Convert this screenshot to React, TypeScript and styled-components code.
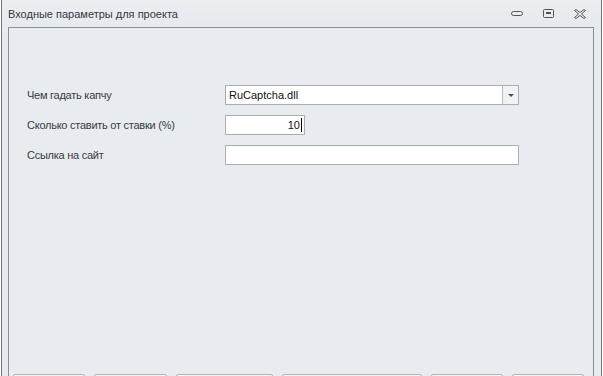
import React from 'react'
import styled, { createGlobalStyle } from 'styled-components'

const GlobalStyle = createGlobalStyle`
  html, body {
    margin: 0;
    padding: 0;
    background: #ffffff;
    overflow: hidden;
  }
  body {
    font-family: "Liberation Sans", Arial, sans-serif;
  }
`

const Window = styled.div`
  margin-left: 1px;
  width: 599px;
  height: 376px;
  overflow: hidden;
  display: flex;
  flex-direction: column;
  background: #e8ebef;
  border-left: 1px solid #72777d;
  border-right: 1px solid #72777d;
`

const TitleBar = styled.div`
  flex: none;
  height: 27px;
  display: flex;
  align-items: center;
  padding-left: 6px;
  background: linear-gradient(#eceef1, #e6e9ed);
`

const Title = styled.div`
  flex: 1;
  font-size: 11px;
  color: #333840;
  padding-top: 1px;
`

const Controls = styled.div`
  display: flex;
  align-items: center;
  gap: 20px;
  padding-right: 15px;
  color: #50555c;
  & > svg {
    display: block;
  }
`

const Panel = styled.div`
  margin: 0 7px 0 6px;
  flex: 1;
  border: 1px solid #8b9097;
  border-bottom: none;
  padding: 57px 0 0 18px;
  display: flex;
  flex-direction: column;
`

const Form = styled.div`
  display: grid;
  grid-template-columns: 198px auto;
  grid-auto-rows: 20px;
  row-gap: 10px;
  align-items: center;
  justify-items: start;
`

const Label = styled.div`
  font-size: 11px;
  letter-spacing: -0.25px;
  color: #383c42;
`

const Box = styled.div<{ $width: number; $align?: 'left' | 'right' }>`
  box-sizing: border-box;
  width: ${p => p.$width}px;
  height: 20px;
  display: flex;
  align-items: center;
  justify-content: ${p => (p.$align === 'right' ? 'flex-end' : 'flex-start')};
  background: #ffffff;
  border: 1px solid #a9adb4;
  padding: 0 ${p => (p.$align === 'right' ? '2px' : '3px')};
  font-size: 11px;
  color: #111111;
`

const BoxText = styled.span`
  flex: 1;
  white-space: nowrap;
`

const Caret = styled.span`
  width: 1px;
  height: 14px;
  background: #000000;
  margin-left: 1px;
`

const DropButton = styled.div`
  width: 15px;
  align-self: stretch;
  margin-right: -3px;
  border-left: 1px solid #b9bcc2;
  background: #f1f2f4;
  display: flex;
  align-items: center;
  justify-content: center;
  &::after {
    content: '';
    border-left: 3px solid transparent;
    border-right: 3px solid transparent;
    border-top: 3px solid #4a4e55;
  }
`

const ButtonBar = styled.div`
  margin-top: 209px;
  margin-left: -14px;
  display: flex;
  gap: 9px;
`

const Button = styled.div<{ $width: number }>`
  flex: none;
  width: ${p => p.$width}px;
  height: 22px;
  box-sizing: border-box;
  border: 1px solid #b2b5ba;
  border-radius: 2px;
  background: linear-gradient(#f3f4f6, #e3e5e9);
`

const buttonWidths = [72, 73, 97, 140, 72, 72]

function WindowControls() {
  return (
    <Controls>
      <svg width="12" height="6" viewBox="0 0 12 6">
        <rect x="0.5" y="0.5" width="11" height="4" rx="2" fill="none" stroke="currentColor" />
      </svg>
      <svg width="11" height="9" viewBox="0 0 11 9">
        <rect x="0.5" y="0.5" width="10" height="8" rx="1" fill="none" stroke="currentColor" />
        <rect x="3" y="3" width="5" height="2" fill="currentColor" />
      </svg>
      <svg width="12" height="10" viewBox="0 0 12 10">
        <path
          d="M0.5 1.5 L2 0.5 L6 3.5 L10 0.5 L11.5 1.5 L7.5 5 L11.5 8.5 L10 9.5 L6 6.5 L2 9.5 L0.5 8.5 L4.5 5 Z"
          fill="none"
          stroke="currentColor"
          strokeWidth="1"
          strokeLinejoin="round"
        />
      </svg>
    </Controls>
  )
}

export default function App() {
  return (
    <>
      <GlobalStyle />
      <Window>
        <TitleBar>
          <Title>Входные параметры для проекта</Title>
          <WindowControls />
        </TitleBar>
        <Panel>
          <Form>
            <Label>Чем гадать капчу</Label>
            <Box $width={294}>
              <BoxText>RuCaptcha.dll</BoxText>
              <DropButton />
            </Box>
            <Label>Сколько ставить от ставки (%)</Label>
            <Box $width={80} $align="right">
              10
              <Caret />
            </Box>
            <Label>Ссылка на сайт</Label>
            <Box $width={294} />
          </Form>
          <ButtonBar>
            {buttonWidths.map((w, i) => (
              <Button key={i} $width={w} />
            ))}
          </ButtonBar>
        </Panel>
      </Window>
    </>
  )
}
